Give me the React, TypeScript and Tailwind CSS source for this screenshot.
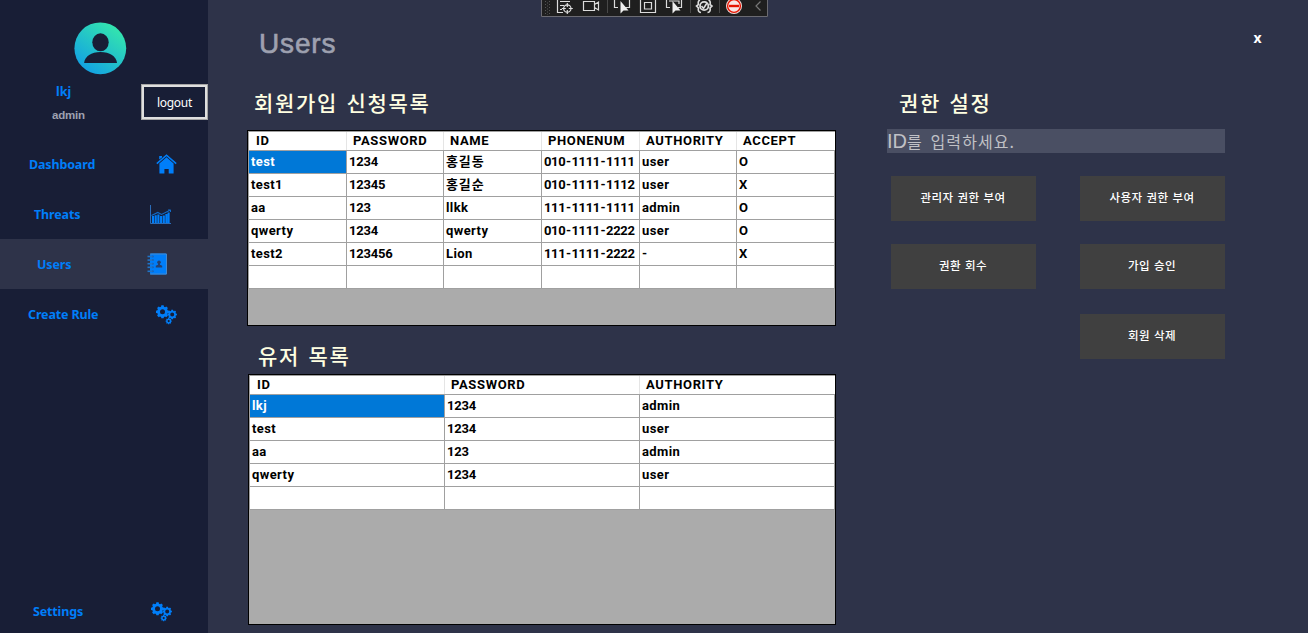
import React from 'react';

const gear = (cx: number, cy: number, r: number, teeth: number, depth: number) => {
  const pts: string[] = [];
  const step = (Math.PI * 2) / teeth;
  for (let i = 0; i < teeth; i++) {
    const a = i * step - Math.PI / 2;
    [[-0.36, r - depth], [-0.22, r], [0.22, r], [0.36, r - depth]].forEach(([o, d]) => {
      pts.push(`${(cx + Math.cos(a + o * step) * d).toFixed(2)},${(cy + Math.sin(a + o * step) * d).toFixed(2)}`);
    });
  }
  return pts.join(' L');
};
const ring = (cx: number, cy: number, r: number) =>
  `M${cx - r},${cy} a${r},${r} 0 1,0 ${r * 2},0 a${r},${r} 0 1,0 ${-r * 2},0 Z`;

const Gears = () => (
  <svg width="22" height="20" viewBox="0 0 22 20" fill="#007ef9" fillRule="evenodd">
    <path d={`M${gear(6.5, 6.8, 6.6, 8, 1.3)} Z ${ring(6.5, 6.8, 2.5)}`} />
    <path d={`M${gear(16.2, 9.5, 4.8, 8, 1)} Z ${ring(16.2, 9.5, 2)}`} />
    <path d={`M${gear(12.7, 16.1, 3.1, 8, 0.6)} Z ${ring(12.7, 16.1, 1.1)}`} />
  </svg>
);

const House = () => (
  <svg width="22" height="20" viewBox="0 0 22 20">
    <path d="M3.4 9.5 L10.5 3.3 L17.6 9.5 V19.4 H12.7 V15 H8.4 V19.4 H3.4 Z" fill="#007ef9" />
    <path d="M0.8 9.6 L10.5 1.3 L20.2 9.6" fill="none" stroke="#007ef9" strokeWidth="1.5" />
    <path d="M3.2 2 H6 V3.4 L3.2 5.6 Z" fill="#007ef9" />
  </svg>
);

const Chart = () => (
  <svg width="22" height="20" viewBox="0 0 22 20">
    <path d="M0.5 0 V18.5 H21" fill="none" stroke="#2b6cb8" strokeWidth="1" />
    <path
      d="M3 11 V18 M5.7 10.2 V18 M8.4 9.5 V18 M11.1 11 V18 M13.8 10.5 V18 M16.4 9 V18 M18.6 7.5 V18"
      stroke="#007ef9"
      strokeWidth="2.1"
    />
    <path d="M1.5 10.5 L7.8 7.4 L11.5 9.5 L20.5 5" fill="none" stroke="#126cc9" strokeWidth="1.1" />
    <path d="M18 5 H20.5 V7" fill="none" stroke="#126cc9" />
  </svg>
);

const Book = () => (
  <svg width="21" height="22" viewBox="0 0 21 22">
    <rect x="3" y="0.5" width="17" height="21" rx="1.5" fill="#007ef9" />
    <path d="M3 1 H19.5 V21 H3" fill="none" stroke="#4389cf" strokeWidth="1" />
    {[3, 6.6, 10.2, 13.8, 17.8].map((y) => (
      <g key={y}>
        <circle cx="5.8" cy={y + 0.5} r="1" fill="#1c5fb0" />
        <path d={`M0.5 ${y + 0.5} H5.5`} stroke="#1e74c9" strokeWidth="1.6" />
      </g>
    ))}
    <circle cx="12" cy="9.3" r="1.8" fill="#25406f" />
    <path d="M11 10 H13 V11.7 L15.2 12.8 V14.4 H8.8 V12.8 L11 11.7 Z" fill="#25406f" />
  </svg>
);

const Avatar = () => (
  <svg width="53" height="53" viewBox="-0.5 -0.5 53 53">
    <defs>
      <linearGradient id="avatar" x1="0.15" y1="0.9" x2="0.75" y2="0.1">
        <stop offset="0" stopColor="#12a1e4" />
        <stop offset="1" stopColor="#32e2b0" />
      </linearGradient>
    </defs>
    <circle cx="25.8" cy="25.8" r="25.9" fill="url(#avatar)" />
    <ellipse cx="26" cy="19.8" rx="8.2" ry="9" fill="#181e36" />
    <path d="M9.6 40.6 C10.3 33.8 16.8 29.6 26 29.6 C35.2 29.6 41.8 33.8 42.5 40.6 Z" fill="#181e36" />
  </svg>
);

const Toolbar = () => (
  <svg width="227" height="17" viewBox="0 0 227 17" fill="none">
    <path d="M0 0 H227 V17 H0 Z" fill="#1f1f1f" />
    <path d="M0.5 0 V16.5 H226.5 V0" stroke="#6b6b72" />
    <path d="M4.5 1 V15 M8.5 1 V15" stroke="#555" strokeDasharray="1 2" />
    <path d="M6.5 2.5 V15" stroke="#555" strokeDasharray="1 2" />
    <g stroke="#dcdcdc" strokeWidth="1.2">
      <path d="M16.5 0 V12.5 H22 M19 1.5 H29 M19 5.5 H23 M19 9.5 H21" />
      <circle cx="26.3" cy="8.5" r="3.7" />
      <path d="M26.3 3 V7 M26.3 10 V14 M20.8 8.5 H24.8 M27.8 8.5 H31.8" />
      <path d="M42.5 1.5 H53.5 V10.5 H42.5 Z M53.5 4.5 L57.5 2 V10 L53.5 7.5" />
      <path d="M73.5 0 V7.5 H77 M88.5 0 V7.5 H84" />
      <path d="M99.5 -1 H114.5 V12.5 H99.5 Z M103.5 2.5 H110.5 V9 H103.5 Z" />
      <path d="M125.5 0 V7.5 H129 M140.5 0 V7.5 H137 M128 1 H138 V4" />
      <path
        d="M159 0 Q156.5 1 157.5 4.5 L155.5 6 L157.5 8 Q156.5 12 160 12.5 M167.5 0 Q170 1 169 4.5 L171 6 L169 8 Q170 12 166.5 12.5"
        strokeWidth="1.6"
      />
      <circle cx="163.2" cy="6" r="4.2" strokeWidth="1.8" />
      <path d="M160.5 6 L162.5 8.5 L166 3" strokeWidth="1.6" />
    </g>
    <path d="M79.5 1 V13.5 L82.5 10.5 H87.5 Z M131.5 1 V13.5 L134.5 10.5 H139.5 Z" fill="#eee" />
    <path d="M66.5 0 V13 M149.5 0 V13 M178.5 0 V13" stroke="#484848" />
    <circle cx="193" cy="6" r="8" fill="#f4dcd8" />
    <circle cx="193" cy="6" r="6.4" fill="#f9e6e4" stroke="#e51400" strokeWidth="1.4" />
    <path d="M188 6 H198" stroke="#e51400" strokeWidth="2.4" />
    <path d="M219.5 1.5 L215 6 L219.5 10.5" stroke="#777" strokeWidth="1.2" />
  </svg>
);

type NavProps = { label: string; icon: React.ReactNode; text: string; gap: string; active?: boolean };
const Nav = ({ label, icon, text, gap, active }: NavProps) => (
  <button
    className={`flex h-[50px] w-full shrink-0 items-center font-['Noto_Sans','Open_Sans',sans-serif] text-[12.5px] font-bold leading-[18px] tracking-[-0.15px] text-[#007ef9] ${active ? 'bg-[#2e3349]' : ''}`}
  >
    <span className={`whitespace-nowrap pt-[2px] text-left ${text}`}>{label}</span>
    <span className={gap}>{icon}</span>
  </button>
);

const tracking = (cell: string) => {
  if (/^\d+$/.test(cell)) return 'tracking-[-0.2px]';
  if (/[가-힣]/.test(cell)) return 'tracking-[0.9px]';
  return 'tracking-[0.4px]';
};

const Phone = ({ value }: { value: string }) => (
  <>
    {value.split('-').map((part, i) => (
      <span key={i} className="tracking-[-0.35px]">
        {i > 0 && <span className="mx-[0.7px]">-</span>}
        {part}
      </span>
    ))}
  </>
);

type GridProps = { cols: string; heads: string[]; rows: string[][]; height: string };
const DataGrid = ({ cols, heads, rows, height }: GridProps) => (
  <div
    className={`overflow-hidden border border-black bg-[#ababab] font-['Roboto','Noto_Sans_CJK_KR',sans-serif] text-[13px] font-bold text-black ${height}`}
  >
    <div className={`grid h-5 border-b border-l border-t border-[#a0a0a0] bg-white ${cols}`}>
      {heads.map((h, i) => (
        <div
          key={h}
          className={`leading-[17px] tracking-[0.65px] ${i === 0 ? 'pl-[7px]' : 'pl-[6px]'} ${i < heads.length - 1 ? 'border-r border-[#e5e5e5]' : ''}`}
        >
          {h}
        </div>
      ))}
    </div>
    {rows.map((row, r) => (
      <div key={r} className={`grid h-[23px] border-l border-[#a0a0a0] ${cols}`}>
        {row.map((cell, c) => (
          <div
            key={c}
            className={`whitespace-nowrap border-b border-r border-[#a0a0a0] pl-[2px] leading-[21px] ${tracking(cell)} ${r === 0 && c === 0 ? 'bg-[#0078d7] text-white' : 'bg-white'}`}
          >
            {/^\d+-/.test(cell) ? <Phone value={cell} /> : cell}
          </div>
        ))}
      </div>
    ))}
  </div>
);

const Action = ({ children }: { children: string }) => (
  <button className="h-[45px] w-[145px] bg-[#404040] pb-[2px] pr-px font-['Noto_Sans_CJK_KR',sans-serif] text-[11.5px] font-medium tracking-[0.45px] text-white [word-spacing:0.9px]">
    {children}
  </button>
);

const heading =
  "font-['Noto_Sans_CJK_KR',sans-serif] text-[21px] font-medium leading-[30px] tracking-[1.7px] text-[#ffffe1] whitespace-nowrap [word-spacing:2px]";

const requests = [
  ['test', '1234', '홍길동', '010-1111-1111', 'user', 'O'],
  ['test1', '12345', '홍길순', '010-1111-1112', 'user', 'X'],
  ['aa', '123', 'llkk', '111-1111-1111', 'admin', 'O'],
  ['qwerty', '1234', 'qwerty', '010-1111-2222', 'user', 'O'],
  ['test2', '123456', 'Lion', '111-1111-2222', '-', 'X'],
  ['', '', '', '', '', ''],
];
const users = [
  ['lkj', '1234', 'admin'],
  ['test', '1234', 'user'],
  ['aa', '123', 'admin'],
  ['qwerty', '1234', 'user'],
  ['', '', ''],
];

export default function App() {
  return (
    <div className="relative flex h-[633px] w-[1308px] overflow-hidden bg-[#2e3349]">
      <aside className="flex h-full w-[208px] shrink-0 flex-col bg-[#181e36]">
        <div className="flex h-[139px] shrink-0">
          <div className="flex w-[141px] flex-col">
            <div className="ml-[74px] mt-[22px] h-[52px]">
              <Avatar />
            </div>
            <div className="ml-[56px] mt-[9px] font-['Noto_Sans',sans-serif] text-[12.5px] font-bold leading-[18px] text-[#007ef9]">lkj</div>
            <div className="ml-[52px] mt-[6px] font-['Liberation_Sans',sans-serif] text-[11.5px] font-bold leading-4 tracking-[-0.2px] text-[#9ea1b0]">admin</div>
          </div>
          <button className="mt-[84px] h-9 w-[67px] border-[3px] border-[#dfdfdf] pt-[2px] font-['Noto_Sans',sans-serif] text-[12px] tracking-[-0.25px] text-white outline outline-1 -outline-offset-1 outline-[#a5a5a5]">
            logout
          </button>
        </div>
        <Nav label="Dashboard" icon={<House />} text="ml-[29px] w-[127px]" gap="" />
        <Nav label="Threats" icon={<Chart />} text="ml-[34px] w-[116px]" gap="pt-[2px]" />
        <Nav label="Users" icon={<Book />} text="ml-[37px] w-[110px]" gap="" active />
        <Nav label="Create Rule" icon={<Gears />} text="ml-[28px] w-[128px]" gap="pt-px" />
        <div className="mt-[247px]">
          <Nav label="Settings" icon={<Gears />} text="ml-[33px] w-[118px]" gap="pt-px" />
        </div>
      </aside>

      <main className="ml-[39px] flex w-[589px] shrink-0 flex-col">
        <h1 className="ml-[12px] mt-[27px] font-['Liberation_Sans',sans-serif] text-[28px] leading-[34px] tracking-[0.85px] text-[#9ea1b0] [-webkit-text-stroke:0.6px_#9ea1b0]">Users</h1>
        <h2 className={`ml-[7px] mt-[26px] ${heading}`}>회원가입 신청목록</h2>
        <div className="mt-[13px]">
          <DataGrid
            cols="grid-cols-[98px_97px_98px_98px_97px_98px]"
            heads={['ID', 'PASSWORD', 'NAME', 'PHONENUM', 'AUTHORITY', 'ACCEPT']}
            rows={requests}
            height="h-[196px]"
          />
        </div>
        <h2 className={`ml-[11px] mt-[14px] ${heading}`}>유저 목록</h2>
        <div className="ml-px mt-[4px]">
          <DataGrid
            cols="grid-cols-[195px_195px_195px]"
            heads={['ID', 'PASSWORD', 'AUTHORITY']}
            rows={users}
            height="h-[251px]"
          />
        </div>
      </main>

      <section className="ml-[51px] flex w-[421px] flex-col">
        <button className="ml-[365px] mt-[29px] h-[18px] w-[11px] font-['Noto_Sans',sans-serif] text-[14px] font-bold leading-[18px] text-white">x</button>
        <h2 className={`ml-[12px] mt-[40px] ${heading}`}>권한 설정</h2>
        <div
          role="textbox"
          className="mt-[12px] flex h-6 w-[338px] shrink-0 items-baseline whitespace-pre bg-[#4a4f63] font-['Noto_Sans_CJK_KR',sans-serif] text-[16px] font-normal leading-[24px] text-[#c0c1c6]"
        >
          <span className="font-['Liberation_Sans',sans-serif] text-[20px] leading-[24px]">ID</span>
          <span className="tracking-[1.1px] [word-spacing:3px]">를 입력하세요.</span>
        </div>
        <div className="ml-1 mt-[23px] grid w-[334px] grid-cols-[145px_145px] grid-rows-[45px_45px_45px] justify-between">
          <Action>관리자 권한 부여</Action>
          <Action>사용자 권한 부여</Action>
          <div className="pt-[23px]">
            <Action>권환 회수</Action>
          </div>
          <div className="pt-[23px]">
            <Action>가입 승인</Action>
          </div>
          <div className="col-start-2 pt-[48px]">
            <Action>회원 삭제</Action>
          </div>
        </div>
      </section>

      <div className="absolute left-[541px] top-0">
        <Toolbar />
      </div>
    </div>
  );
}
